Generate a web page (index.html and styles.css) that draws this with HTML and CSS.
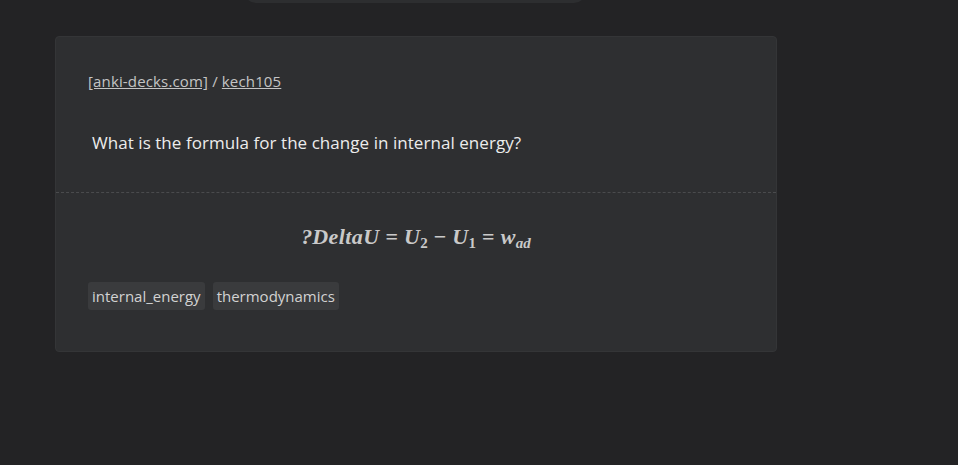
FILE: index.html
```html
<!DOCTYPE html>
<html>
<head>
<meta charset="utf-8">
<link rel="stylesheet" href="styles.css">
</head>
<body>
<div class="topbar"></div>
<main class="page">
  <section class="card">
    <div class="front">
      <div class="crumbs"><a href="#">[anki-decks.com]</a> / <a href="#">kech105</a></div>
      <p class="question">What is the formula for the change in internal energy?</p>
    </div>
    <div class="back">
      <div class="formula"><span class="up">?</span><i>DeltaU</i><span class="op">=</span><i>U</i><sub>2</sub><span class="op">−</span><i>U</i><sub>1</sub><span class="op">=</span><i>w</i><sub class="it">ad</sub></div>
      <div class="tags">
        <span class="tag">internal_energy</span>
        <span class="tag">thermodynamics</span>
      </div>
    </div>
  </section>
</main>
</body>
</html>
```

FILE: styles.css
```css
*, *::before, *::after { box-sizing: border-box; }
html, body {
  margin: 0;
  padding: 0;
  background: #232325;
  height: 100%;
}
body {
  font-family: "Open Sans", "Noto Sans", sans-serif;
  overflow: hidden;
}
.topbar {
  position: absolute;
  top: -20px;
  left: 244px;
  width: 342px;
  height: 23px;
  background: #2d2e30;
  border-radius: 0 0 12px 12px;
}
.page {
  padding: 36px 0 0 55px;
}
.card {
  width: 722px;
  background: #2e2f31;
  border: 1px solid #343537;
  border-radius: 4px;
}
.front {
  padding: 34px 33px 0 32px;
  height: 156px;
  border-bottom: 1px dashed #4a4b4d;
}
.crumbs {
  font-size: 15px;
  color: #c4c4c4;
  line-height: 20px;
  letter-spacing: 0.15px;
}
.crumbs a {
  color: #c4c4c4;
  text-decoration: underline;
}
.question {
  margin: 40px 0 0 4px;
  font-size: 17px;
  color: #ececec;
  line-height: 24px;
  letter-spacing: 0.05px;
}
.back {
  padding: 29px 32px 41px 32px;
}
.formula {
  text-align: center;
  font-family: "Liberation Serif", "DejaVu Serif", serif;
  font-weight: bold;
  font-size: 22px;
  color: #c9c9c9;
  line-height: 30px;
  height: 30px;
}
.formula i { font-style: italic; letter-spacing: 0.4px; }
.formula .up { font-style: italic; }
.formula .op { font-style: normal; margin: 0 6px; }
.formula sub {
  font-size: 15px;
  font-style: normal;
  vertical-align: -4px;
  line-height: 0;
}
.formula sub.it { font-style: italic; }
.tags {
  margin-top: 30px;
  display: flex;
  gap: 8px;
}
.tag {
  background: #3a3b3d;
  color: #d2d2d2;
  font-size: 15px;
  line-height: 28px;
  padding: 0 4px;
  border-radius: 3px;
}
```
